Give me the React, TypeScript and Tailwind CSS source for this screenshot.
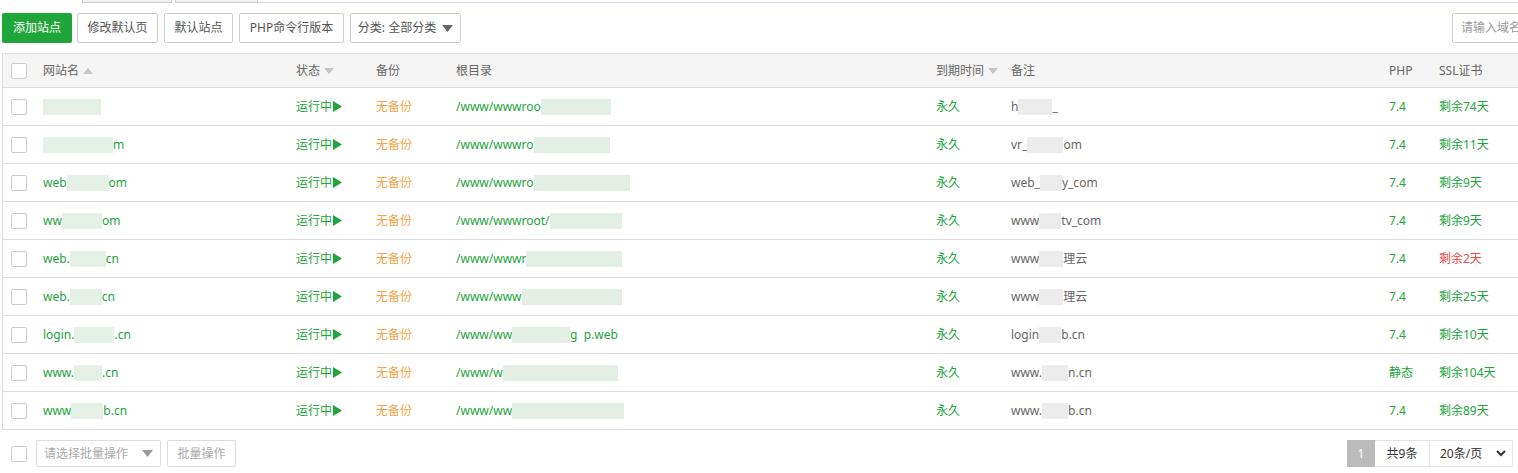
import type { ReactNode } from "react";

type Row = {
  name: [string, number, string];
  path: [string, number, string];
  remark: [string, number, string];
  php: string;
  ssl: string;
  expiring?: boolean;
};

const rows: Row[] = [
  { name: ["", 58, ""], path: ["/www/wwwroo", 70, ""], remark: ["h", 34, "_"], php: "7.4", ssl: "剩余74天" },
  { name: ["", 70, "m"], path: ["/www/wwwro", 76, ""], remark: ["vr_", 36, "om"], php: "7.4", ssl: "剩余11天" },
  { name: ["web", 42, "om"], path: ["/www/wwwro", 96, ""], remark: ["web_", 22, "y_com"], php: "7.4", ssl: "剩余9天" },
  { name: ["ww", 40, "om"], path: ["/www/wwwroot/", 72, ""], remark: ["www", 22, "tv_com"], php: "7.4", ssl: "剩余9天" },
  { name: ["web.", 36, "cn"], path: ["/www/wwwr", 96, ""], remark: ["www", 24, "理云"], php: "7.4", ssl: "剩余2天", expiring: true },
  { name: ["web.", 32, "cn"], path: ["/www/www", 100, ""], remark: ["www", 24, "理云"], php: "7.4", ssl: "剩余25天" },
  { name: ["login.", 40, ".cn"], path: ["/www/ww", 58, "g  p.web"], remark: ["login", 22, "b.cn"], php: "7.4", ssl: "剩余10天" },
  { name: ["www.", 28, ".cn"], path: ["/www/w", 115, ""], remark: ["www.", 26, "n.cn"], php: "静态", ssl: "剩余104天" },
  { name: ["www", 32, "b.cn"], path: ["/www/ww", 112, ""], remark: ["www.", 26, "b.cn"], php: "7.4", ssl: "剩余89天" },
];

const cols = "grid grid-cols-[30px_253px_80px_80px_480px_75px_378px_50px_1fr]";

function Check() {
  return <span className="block w-4 h-4 border border-[#ccc] rounded-[2px] bg-white" />;
}

function Caret({ up = false }: { up?: boolean }) {
  return (
    <svg width="10" height="6" viewBox="0 0 10 6" className="ml-1 inline-block">
      {up ? <path d="M0 6 L5 0 L10 6 Z" fill="#c5c5c5" /> : <path d="M0 0 L10 0 L5 6 Z" fill="#c5c5c5" />}
    </svg>
  );
}

function Masked({ parts, tone }: { parts: [string, number, string]; tone: string }) {
  return (
    <span className="inline-flex items-center whitespace-pre">
      {parts[0]}
      <span className={`inline-block h-[16px] ${tone}`} style={{ width: parts[1] }} />
      {parts[2]}
    </span>
  );
}

function Cell({ children, className = "" }: { children?: ReactNode; className?: string }) {
  return <div className={`flex items-center pl-[10px] ${className}`}>{children}</div>;
}

export default function App() {
  return (
    <div
      className="w-[1518px] h-[473px] overflow-hidden bg-white text-[12px] text-[#666]"
      style={{ fontFamily: '"Noto Sans", "Noto Sans CJK SC", sans-serif' }}
    >
      {/* tab strip remnant */}
      <div className="flex h-[3px]">
        <div className="w-[82px]" />
        <div className="w-[90px] border-x border-b border-[#ccc] bg-[#f0f0f0]" />
        <div className="w-[3px]" />
        <div className="w-[83px] border-x border-b border-[#ccc] bg-[#f0f0f0]" />
        <div className="flex-1 border-b border-[#d3d0e2]" />
      </div>

      {/* toolbar */}
      <div className="flex items-center mt-[10px] pl-[2px] h-[30px]">
        <button className="h-[30px] px-[11px] rounded-[2px] bg-[#20a53a] text-white text-[12px]">添加站点</button>
        <button className="ml-[5px] h-[30px] w-[81px] rounded-[2px] border border-[#ccc] text-[#555]">修改默认页</button>
        <button className="ml-[6px] h-[30px] w-[69px] rounded-[2px] border border-[#ccc] text-[#555]">默认站点</button>
        <button className="ml-[6px] h-[30px] w-[105px] rounded-[2px] border border-[#ccc] text-[#555]">PHP命令行版本</button>
        <button className="ml-[6px] h-[30px] w-[111px] rounded-[2px] border border-[#ccc] text-[#555] flex items-center justify-center gap-[6px]">
          分类: 全部分类
          <svg width="11" height="7" viewBox="0 0 11 7">
            <path d="M0 0 L11 0 L5.5 7 Z" fill="#666" />
          </svg>
        </button>
        <div className="ml-auto -mr-[84px] h-[30px] w-[150px] border border-[#ccc] rounded-[2px] flex items-center pl-[8px] text-[#999]">
          请输入域名或备注
        </div>
      </div>

      {/* table */}
      <div className="mt-[10px] ml-[2px] border-l border-t border-[#ddd]">
        <div className={`${cols} h-[34px] bg-[#f5f5f5] border-b border-[#ddd] text-[#666]`}>
          <div className="flex items-center pl-[8px]"><Check /></div>
          <Cell>网站名<Caret up /></Cell>
          <Cell>状态<Caret /></Cell>
          <Cell>备份</Cell>
          <Cell>根目录</Cell>
          <Cell>到期时间<Caret /></Cell>
          <Cell>备注</Cell>
          <Cell>PHP</Cell>
          <Cell>SSL证书</Cell>
        </div>
        {rows.map((r, i) => (
          <div key={i} className={`${cols} h-[38px] border-b border-[#ddd]`}>
            <div className="flex items-center pl-[8px]"><Check /></div>
            <Cell className="text-[#20a53a]"><Masked parts={r.name} tone="bg-[#e5f1e7]" /></Cell>
            <Cell className="text-[#20a53a]">
              运行中
              <svg width="9" height="11" viewBox="0 0 9 11" className="ml-[1px]">
                <path d="M0 0 L9 5.5 L0 11 Z" fill="#20a53a" />
              </svg>
            </Cell>
            <Cell className="text-[#f7a24a]">无备份</Cell>
            <Cell className="text-[#20a53a]"><Masked parts={r.path} tone="bg-[#e3efe5]" /></Cell>
            <Cell className="text-[#20a53a]">永久</Cell>
            <Cell className="text-[#666]"><Masked parts={r.remark} tone="bg-[#ececec]" /></Cell>
            <Cell className="text-[#20a53a]">{r.php}</Cell>
            <Cell className={r.expiring ? "text-[#ef4b4b]" : "text-[#20a53a]"}>{r.ssl}</Cell>
          </div>
        ))}
      </div>

      {/* footer */}
      <div className="flex items-center mt-[10px] pl-[11px] pr-[5px] h-[27px]">
        <Check />
        <div className="ml-[9px] h-[27px] w-[125px] border border-[#ddd] rounded-[2px] flex items-center justify-between px-[7px] text-[#aaa]">
          请选择批量操作
          <svg width="11" height="7" viewBox="0 0 11 7">
            <path d="M0 0 L11 0 L5.5 7 Z" fill="#999" />
          </svg>
        </div>
        <div className="ml-[6px] h-[27px] w-[69px] border border-[#ddd] rounded-[2px] flex items-center justify-center text-[#aaa]">
          批量操作
        </div>
        <div className="ml-auto flex h-[27px]">
          <div className="w-[28px] bg-[#bbb] text-white flex items-center justify-center">1</div>
          <div className="w-[54px] border-y border-[#e4e4e4] flex items-center justify-center text-[#333]">共9条</div>
          <div className="w-[84px] border border-[#e4e4e4] flex items-center justify-between pl-[10px] pr-[6px] text-[#333]">
            20条/页
            <svg width="10" height="7" viewBox="0 0 10 7">
              <path d="M1 1 L5 5 L9 1" stroke="#333" strokeWidth="2" fill="none" />
            </svg>
          </div>
        </div>
      </div>
    </div>
  );
}
